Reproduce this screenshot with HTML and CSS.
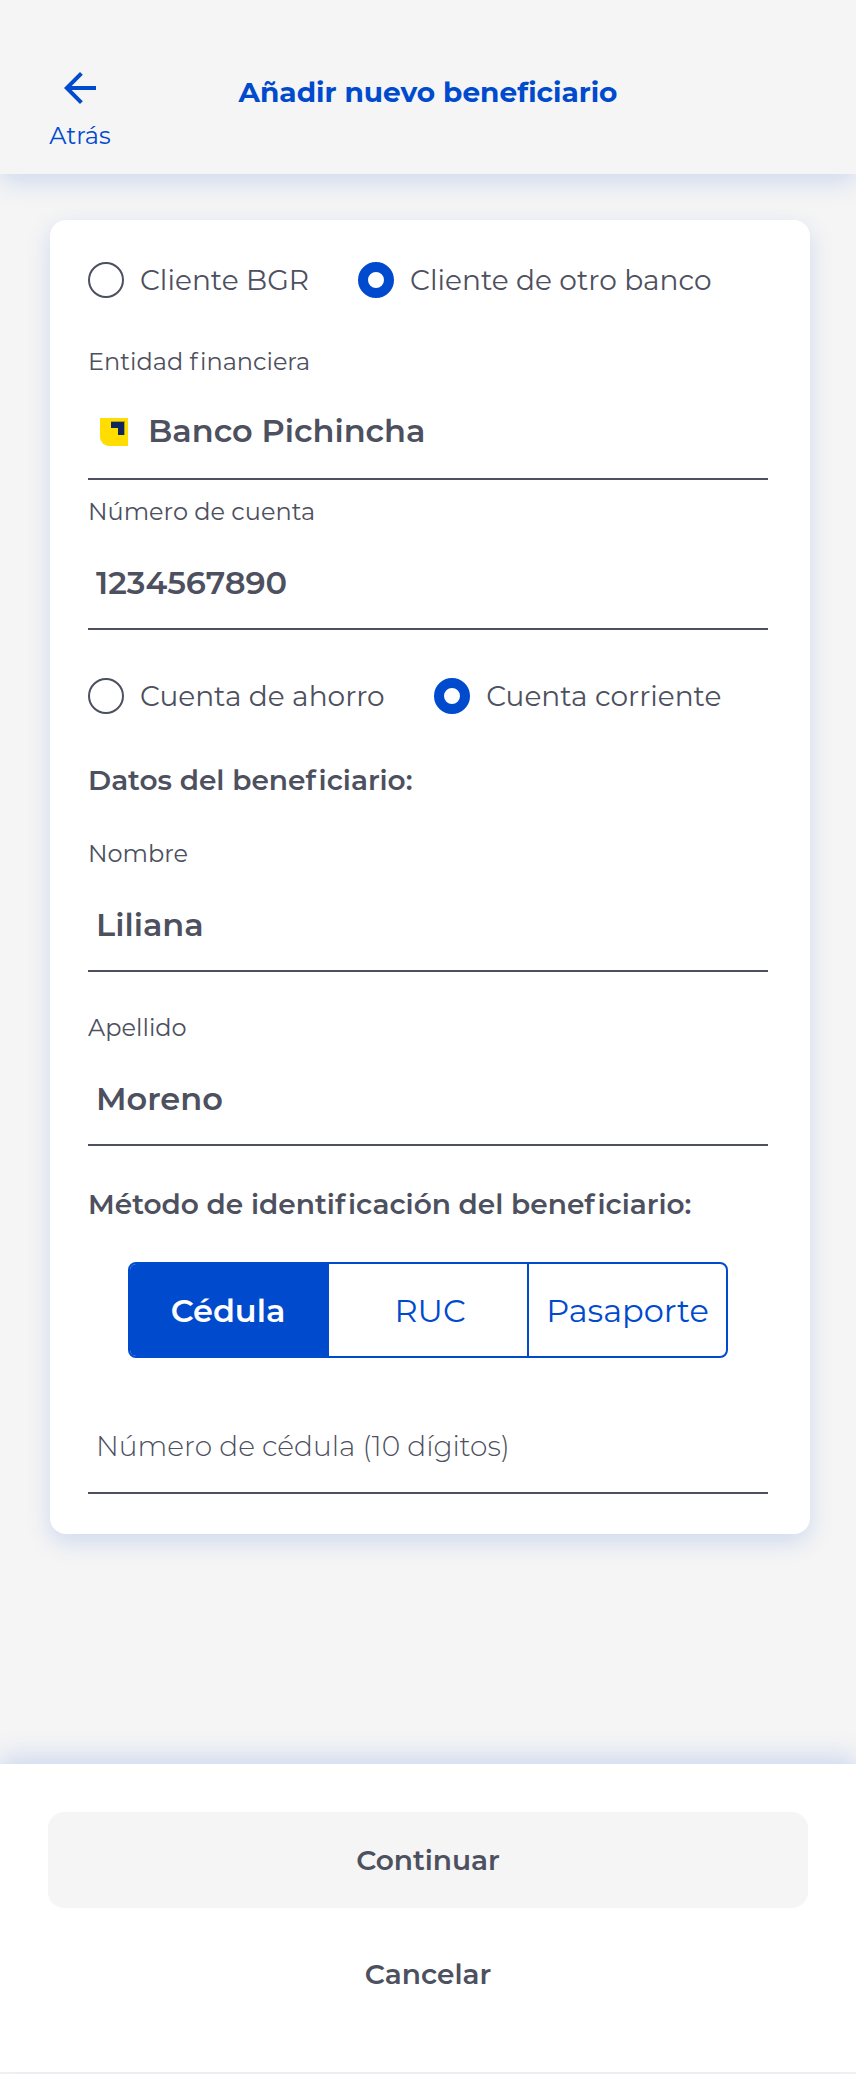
FILE: index.html
```html
<!DOCTYPE html>
<html lang="es">
<head>
<meta charset="utf-8">
<title>Añadir nuevo beneficiario</title>
<link rel="stylesheet" href="styles.css">
</head>
<body>
<div class="screen">
  <header class="header">
    <a class="back">
      <svg class="back-icon" viewBox="0 0 24 24"><path d="M20 11H7.83l5.59-5.59L12 4l-8 8 8 8 1.41-1.41L7.83 13H20z" fill="currentColor"/></svg>
      <span class="back-label">Atrás</span>
    </a>
    <h1 class="title">Añadir nuevo beneficiario</h1>
  </header>

  <main class="card">
    <div class="radios">
      <div class="radio"><span class="dot"></span>Cliente BGR</div>
      <div class="radio"><span class="dot dot-on"></span>Cliente de otro banco</div>
    </div>

    <div class="field field-bank">
      <div class="label">Entidad <span class="f">f</span>inanciera</div>
      <div class="value">
        <svg class="bank-logo" viewBox="0 0 28 28"><path d="M0 0h28v28H9a9 9 0 0 1-9-9z" fill="#ffdd00"/><path d="M11 3h14v14h-2V4H11z" fill="#b09c2c"/><path d="M11 4h13v13h-6v-7h-7z" fill="#0f265c"/></svg>
        Banco Pichincha
      </div>
    </div>
    <div class="field field-account">
      <div class="label">Número de cuenta</div>
      <div class="value">1234567890</div>
    </div>

    <div class="radios radios-account">
      <div class="radio"><span class="dot"></span>Cuenta de ahorro</div>
      <div class="radio"><span class="dot dot-on"></span>Cuenta corriente</div>
    </div>

    <h2 class="section">Datos del bene<span class="f">f</span>iciario:</h2>
    <div class="field">
      <div class="label">Nombre</div>
      <div class="value">Liliana</div>
    </div>
    <div class="field">
      <div class="label">Apellido</div>
      <div class="value">Moreno</div>
    </div>

    <h2 class="section section-method">Método de identi<span class="f">f</span>icación del bene<span class="f">f</span>iciario:</h2>
    <div class="tabs">
      <div class="tab tab-on">Cédula</div>
      <div class="tab tab-mid">RUC</div>
      <div class="tab">Pasaporte</div>
    </div>
    <div class="placeholder">Número de cédula (10 dígitos)</div>
  </main>

  <footer class="footer">
    <button class="button button-main">Continuar</button>
    <button class="button">Cancelar</button>
  </footer>
</div>
</body>
</html>
```
FILE: styles.css
```css
* { box-sizing: border-box; }
body {
  margin: 0;
  background: #f5f5f5;
  color: #4d505e;
  font-family: Montserrat, Inter, sans-serif;
  font-size: 28px;
}
.screen {
  width: 856px;
  height: 2074px;
  display: flex;
  flex-direction: column;
  overflow: hidden;
}
.header {
  display: grid;
  grid-template-columns: 64px 1fr 64px;
  height: 174px;
  flex: none;
  padding: 64px 48px 0;
  color: #004ace;
  background: #f5f5f5;
  box-shadow: 0 8px 24px rgba(0, 74, 206, .16);
}
.back {
  display: flex;
  flex-direction: column;
  align-items: center;
  gap: 9px;
}
.back-icon { width: 48px; height: 48px; }
.back-label { font-size: 24px; line-height: 30px; }
.title {
  margin: 8px 0 0;
  font-size: 28px;
  font-weight: 700;
  line-height: 40px;
  text-align: center;
}
.card {
  flex: none;
  width: 760px;
  margin: 46px 0 0 50px;
  padding: 42px 42px 40px 38px;
  background: #fff;
  border-radius: 16px;
  box-shadow: 0 8px 24px rgba(0, 74, 206, .16);
}
.radios { display: flex; gap: 49px; }
.radios-account { gap: 49.5px; margin-top: 48px; }
.radio {
  display: flex;
  align-items: center;
  gap: 16px;
  line-height: 36px;
  letter-spacing: .02px;
}
.dot {
  width: 36px;
  height: 36px;
  border: 2px solid #4d505e;
  border-radius: 50%;
}
.dot-on { border: 10px solid #004ace; }
.field { margin-top: 41px; }
.field-bank { margin-top: 49px; }
.field-account { margin-top: 17px; }
.label {
  font-size: 24px;
  line-height: 30px;
}
/* keeps "f" and "i" as two separate letters */
.f { letter-spacing: .1em; }
.value {
  display: flex;
  align-items: center;
  height: 92px;
  margin-top: 11px;
  padding: 0 0 2px 8px;
  border-bottom: 2px solid #4d505e;
  font-size: 32px;
  font-weight: 600;
}
.field-bank .value {
  gap: 20px;
  height: 96px;
  margin-top: 7px;
  padding-left: 12px;
}
.bank-logo { width: 28px; height: 28px; margin-top: 4px; }
.section {
  margin: 48px 0 0;
  font-size: 28px;
  font-weight: 600;
  line-height: 36px;
}
.section-method { margin-top: 40px; }
.tabs {
  display: grid;
  grid-template-columns: 199px 198px 199px;
  width: 600px;
  height: 96px;
  margin: 40px 0 0 40px;
  border: 2px solid #004ace;
  border-radius: 8px;
  overflow: hidden;
  color: #004ace;
  font-size: 32px;
}
.tab {
  display: flex;
  align-items: center;
  justify-content: center;
}
.tab:last-child { border-left: 2px solid #004ace; }
.tab-on {
  padding-right: 3px;
  background: #004ace;
  color: #fff;
  font-weight: 600;
}
.tab-mid { padding-left: 4px; }
.placeholder {
  display: flex;
  align-items: center;
  height: 94px;
  margin-top: 42px;
  padding-left: 8px;
  border-bottom: 2px solid #4d505e;
  font-weight: 300;
}
.footer {
  display: flex;
  flex-direction: column;
  gap: 18px;
  flex: none;
  height: 308px;
  margin-top: 230px;
  padding: 48px;
  background: #fff;
  box-shadow: 0 -8px 24px rgba(0, 74, 206, .16);
}
.button {
  height: 96px;
  flex: none;
  padding: 0;
  border: 0;
  border-radius: 16px;
  background: none;
  color: inherit;
  font: 600 28px/36px Montserrat, Inter, sans-serif;
}
.button-main { background: #f5f5f5; }
```
